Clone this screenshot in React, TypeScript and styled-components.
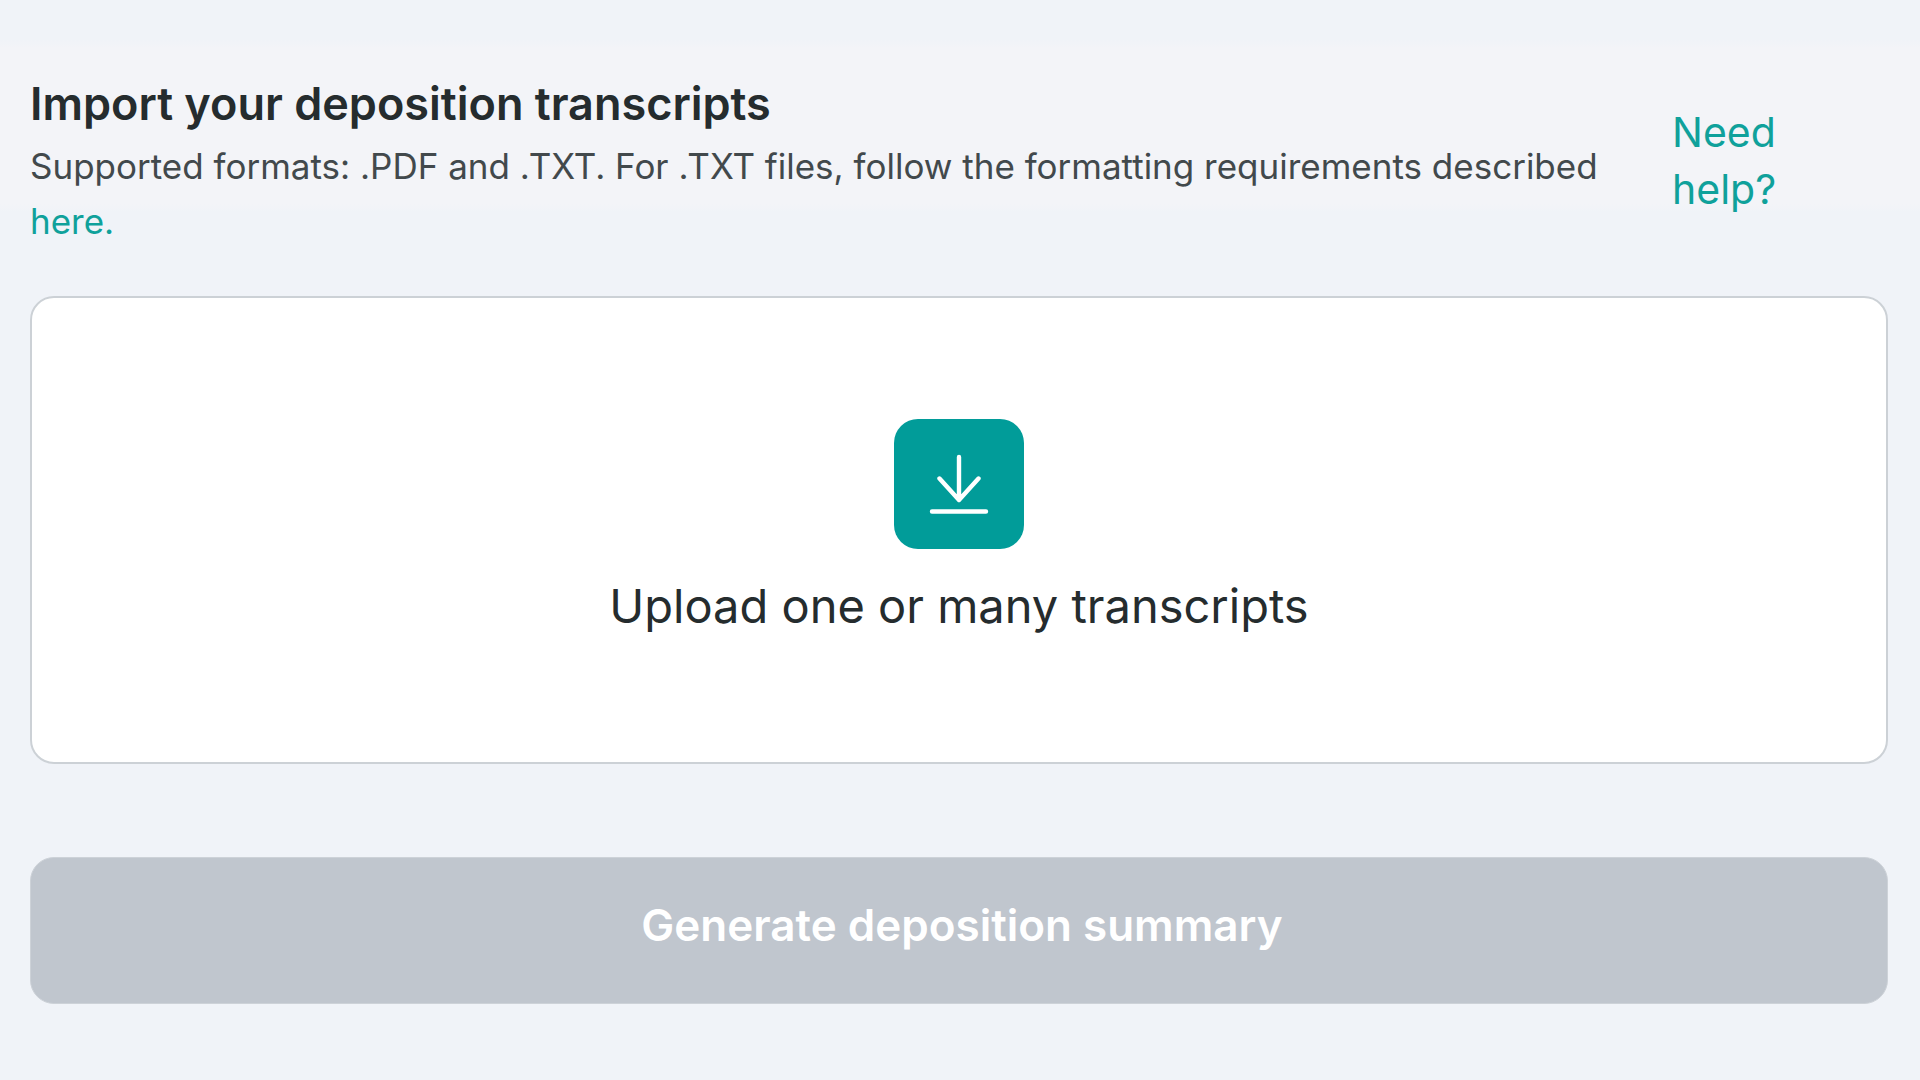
import React from "react";
import styled, { createGlobalStyle } from "styled-components";

const GlobalStyle = createGlobalStyle`
  *, *::before, *::after { box-sizing: border-box; }
  body {
    margin: 0;
    background: #f0f3f8;
    color: #252c2e;
    font-family: Inter, "Liberation Sans", sans-serif;
  }
`;

const Page = styled.main`
  min-height: 100vh;
  padding: 72px 32px 76px 30px;
  background: linear-gradient(#f0f3f8 40px, #f3f4f8 48px, #f3f4f8 204px, #f0f3f8 212px);
`;

const Header = styled.header`
  display: flex;
  align-items: center;
  gap: 64px;
`;

const Intro = styled.div`
  flex: 1;
`;

const Title = styled.h1`
  margin: 0 0 3px;
  font-size: 45px;
  font-weight: 600;
  line-height: 64px;
`;

const Description = styled.p`
  margin: 0;
  color: #42494c;
  font-size: 35px;
  line-height: 55px;
`;

const Link = styled.a`
  color: #0fa19b;
  text-decoration: none;
`;

const HelpLink = styled(Link)`
  flex: none;
  width: 216px;
  padding-right: 64px;
  font-size: 41px;
  line-height: 57px;
`;

const DropZone = styled.button`
  display: flex;
  flex-direction: column;
  align-items: center;
  gap: 23px;
  width: 100%;
  margin-top: 47px;
  padding: 121px 24px 122px;
  border: 2px solid #ccd1d6;
  border-radius: 24px;
  background: #fff;
  color: #252c2e;
  font: inherit;
  font-size: 47px;
  line-height: 68px;
  cursor: pointer;
`;

const IconTile = styled.span`
  display: grid;
  place-items: center;
  width: 130px;
  height: 130px;
  border-radius: 24px;
  background: #019c99;
`;

const SubmitButton = styled.button`
  width: 100%;
  margin-top: 93px;
  padding: 35px 24px 46px 30px;
  border: 1px solid #cdd2d8;
  border-radius: 24px;
  background: #c0c6ce;
  color: #fff;
  font: inherit;
  font-size: 44px;
  font-weight: 600;
  line-height: 64px;
`;

function DownloadIcon() {
  return (
    <svg width="60" height="60" viewBox="0 0 60 60" fill="none" stroke="#fff" strokeWidth="4.4" strokeLinecap="round" strokeLinejoin="round" aria-hidden="true">
      <path d="M30 3v43M10.500 24.500 30 46 49.500 24.500M3 57.500h54" />
    </svg>
  );
}

export default function App() {
  return (
    <>
      <GlobalStyle />
      <Page>
        <Header>
          <Intro>
            <Title>Import your deposition transcripts</Title>
            <Description>
              Supported formats: .PDF and .TXT. For .TXT files, follow the formatting requirements described{" "}
              <Link href="#formatting">here.</Link>
            </Description>
          </Intro>
          <HelpLink href="#help">Need help?</HelpLink>
        </Header>
        <DropZone type="button">
          <IconTile>
            <DownloadIcon />
          </IconTile>
          Upload one or many transcripts
        </DropZone>
        <SubmitButton type="button" disabled>
          Generate deposition summary
        </SubmitButton>
      </Page>
    </>
  );
}
